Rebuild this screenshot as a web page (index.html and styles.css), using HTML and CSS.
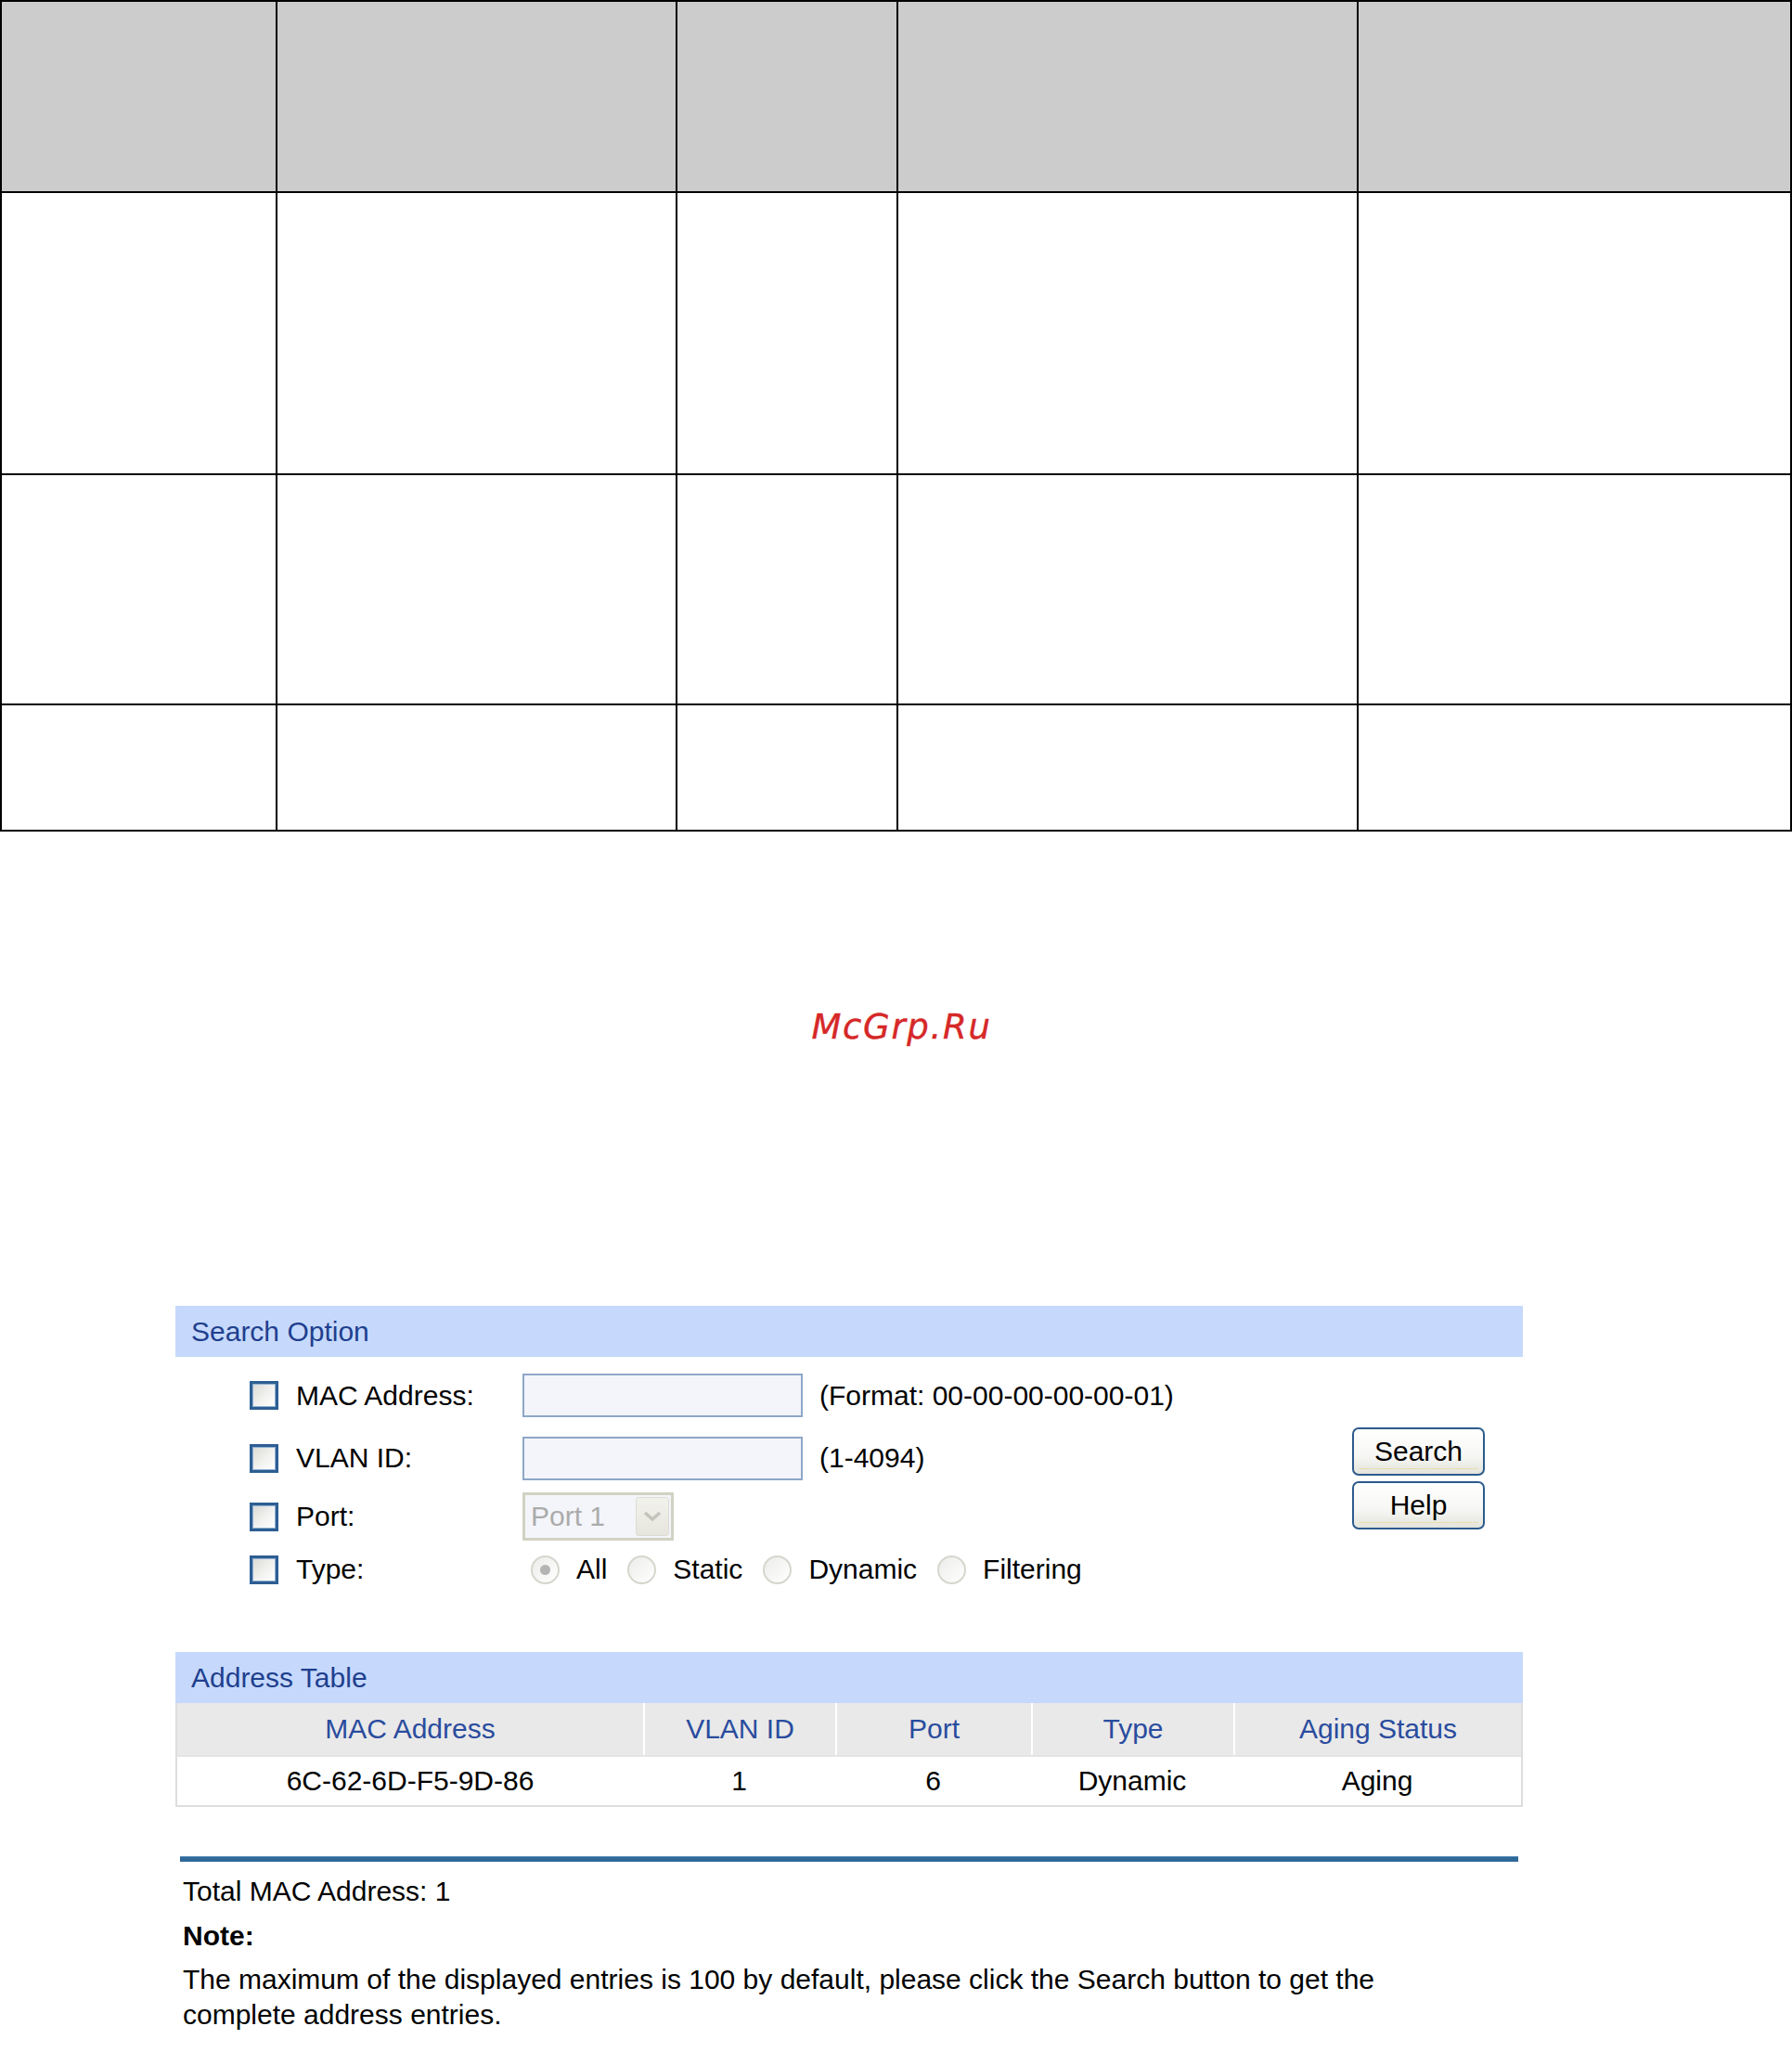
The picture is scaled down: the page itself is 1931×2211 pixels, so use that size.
FILE: index.html
```html
<!DOCTYPE html>
<html>
<head>
<meta charset="utf-8">
<title>Address Table</title>
<link rel="stylesheet" href="styles.css">
</head>
<body>
<table class="grid">
  <tr class="r-head"><td class="c1"></td><td class="c2"></td><td class="c3"></td><td class="c4"></td><td class="c5"></td></tr>
  <tr class="r-a"><td></td><td></td><td></td><td></td><td></td></tr>
  <tr class="r-b"><td></td><td></td><td></td><td></td><td></td></tr>
  <tr class="r-c"><td></td><td></td><td></td><td></td><td></td></tr>
</table>

<div class="watermark">McGrp.Ru</div>

<div class="panel">
  <div class="bar">Search Option</div>
  <div class="form">
    <div class="rows">
      <div class="row row1">
        <span class="cb"></span>
        <span class="lbl">MAC Address:</span>
        <span class="input"></span>
        <span class="hint">(Format: 00-00-00-00-00-01)</span>
      </div>
      <div class="row row2">
        <span class="cb"></span>
        <span class="lbl">VLAN ID:</span>
        <span class="input"></span>
        <span class="hint">(1-4094)</span>
      </div>
      <div class="row row3">
        <span class="cb"></span>
        <span class="lbl">Port:</span>
        <span class="select"><span class="sel-text">Port 1</span><span class="sel-btn"><svg width="22" height="14" viewBox="0 0 22 14"><path d="M3 3 L11 10 L19 3" fill="none" stroke="#c4c4bc" stroke-width="3.5"/></svg></span></span>
      </div>
      <div class="row row4">
        <span class="cb"></span>
        <span class="lbl">Type:</span>
        <span class="radios">
          <span class="opt"><span class="radio checked"></span>All</span>
          <span class="opt"><span class="radio"></span>Static</span>
          <span class="opt"><span class="radio"></span>Dynamic</span>
          <span class="opt"><span class="radio"></span>Filtering</span>
        </span>
      </div>
    </div>
    <div class="buttons">
      <span class="btn">Search</span>
      <span class="btn">Help</span>
    </div>
  </div>

  <div class="bar bar2">Address Table</div>
  <div class="atable">
    <div class="th">MAC Address</div>
    <div class="th">VLAN ID</div>
    <div class="th">Port</div>
    <div class="th">Type</div>
    <div class="th">Aging Status</div>
    <div class="td">6C-62-6D-F5-9D-86</div>
    <div class="td">1</div>
    <div class="td">6</div>
    <div class="td">Dynamic</div>
    <div class="td">Aging</div>
  </div>
</div>

<div class="footer">
  <div class="rule"></div>
  <div class="total">Total MAC Address: 1</div>
  <div class="note">Note:</div>
  <p class="desc">The maximum of the displayed entries is 100 by default, please click the Search button to get the complete address entries.</p>
</div>
</body>
</html>
```

FILE: styles.css
```css
html, body {
  margin: 0;
  padding: 0;
  background: #ffffff;
}
body {
  width: 1931px;
  font-family: "Liberation Sans", Arial, sans-serif;
  font-size: 30px;
  color: #000;
}

/* top empty table */
.grid {
  border-collapse: collapse;
  width: 1931px;
  table-layout: fixed;
}
.grid td {
  border: 2px solid #000;
  padding: 0;
}
.grid .c1 { width: 295px; }
.grid .c2 { width: 429px; }
.grid .c3 { width: 236px; }
.grid .c4 { width: 494px; }
.r-head td { background: #cccccc; height: 204px; }
.r-a td { height: 302px; }
.r-b td { height: 246px; }
.r-c td { height: 134px; }

/* watermark */
.watermark {
  margin-top: 189px;
  height: 44px;
  line-height: 44px;
  padding-left: 12px;
  text-align: center;
  font-family: "DejaVu Sans", Verdana, sans-serif;
  font-style: italic;
  font-size: 37px;
  letter-spacing: 1.7px;
  color: #d62828;
  -webkit-text-stroke: 0.4px #d62828;
}

/* panel */
.panel {
  margin-top: 278px;
  margin-left: 189px;
  width: 1452px;
}
.bar {
  height: 55px;
  line-height: 55px;
  padding-left: 17px;
  background: #c6d9fc;
  color: #1f3f8e;
  box-sizing: border-box;
}
.form {
  display: flex;
  height: 318px;
}
.rows {
  display: flex;
  flex-direction: column;
  padding-top: 8px;
  flex: 1;
}
.row {
  display: flex;
  align-items: center;
  padding-left: 80px;
}
.row1 { height: 67px; }
.row2 { height: 68px; }
.row3 { height: 58px; }
.row4 { height: 56px; }

.cb {
  width: 31px;
  height: 31px;
  box-sizing: border-box;
  border: 3px solid #2d5e92;
  box-shadow: inset 0 0 0 1px #8fb0d4;
  background: linear-gradient(135deg, #d8d8d4 0%, #f2f2f0 55%, #ffffff 100%);
  margin-right: 19px;
  flex: none;
}
.lbl {
  width: 244px;
  flex: none;
}
.input {
  width: 302px;
  height: 47px;
  box-sizing: border-box;
  border: 2px solid #8ea7c8;
  background: #f3f5fb;
  flex: none;
}
.hint {
  margin-left: 18px;
}
.select {
  display: flex;
  align-items: center;
  width: 163px;
  height: 52px;
  box-sizing: border-box;
  border: 3px solid #d2d2c4;
  background: #f4f5fa;
  flex: none;
}
.sel-text {
  flex: 1;
  padding-left: 6px;
  color: #ababab;
}
.sel-btn {
  width: 36px;
  height: 42px;
  margin-right: 2px;
  box-sizing: border-box;
  border: 1px solid #dcdcd2;
  border-radius: 3px;
  background: linear-gradient(#f2f2ec, #e6e6de);
  display: flex;
  align-items: center;
  justify-content: center;
}
.radios {
  display: flex;
  align-items: center;
  padding-left: 9px;
}
.opt {
  display: flex;
  align-items: center;
  margin-right: 22px;
}
.radio {
  width: 31px;
  height: 31px;
  box-sizing: border-box;
  border-radius: 50%;
  border: 2px solid #d6d6ce;
  background: linear-gradient(135deg, #ececea, #ffffff);
  margin-right: 18px;
  position: relative;
}
.radio.checked::after {
  content: "";
  position: absolute;
  left: 8px;
  top: 8px;
  width: 11px;
  height: 11px;
  border-radius: 50%;
  background: #b4b4b4;
}

.buttons {
  display: flex;
  flex-direction: column;
  gap: 6px;
  margin-top: 76px;
  margin-right: 41px;
}
.btn {
  width: 143px;
  height: 52px;
  box-sizing: border-box;
  border: 2px solid #2c5b8c;
  border-radius: 7px;
  background: linear-gradient(#ffffff 0%, #f6f6f4 60%, #e4e4dc 100%);
  display: flex;
  align-items: center;
  justify-content: center;
  position: relative;
}
.btn::after {
  content: "";
  position: absolute;
  left: 6px;
  right: 6px;
  bottom: 5px;
  border-bottom: 1px dotted #e6d27a;
}

/* address table */
.atable {
  display: grid;
  grid-template-columns: 502px 207px 211px 218px 310px;
  border: 2px solid #dedede;
  border-top: none;
  box-sizing: border-box;
  width: 1452px;
}
.th {
  height: 56px;
  line-height: 56px;
  text-align: center;
  background: #e9e9e9;
  color: #2a4c9e;
  border-left: 2px solid #ffffff;
}
.th:first-child { border-left: none; }
.td {
  height: 52px;
  line-height: 52px;
  text-align: center;
  background: #ffffff;
  border-top: 2px solid #e4e4e4;
}

/* footer */
.footer {
  margin-left: 194px;
  margin-top: 53px;
}
.rule {
  width: 1442px;
  height: 6px;
  background: #2f6899;
  border-top: 1px solid #5b8dbb;
  box-sizing: border-box;
}
.total {
  margin-top: 13px;
  line-height: 38px;
  padding-left: 3px;
}
.note {
  margin-top: 10px;
  line-height: 38px;
  padding-left: 3px;
  font-weight: bold;
}
.desc {
  margin: 9px 0 0 0;
  padding-left: 3px;
  width: 1380px;
  line-height: 38px;
}
```
